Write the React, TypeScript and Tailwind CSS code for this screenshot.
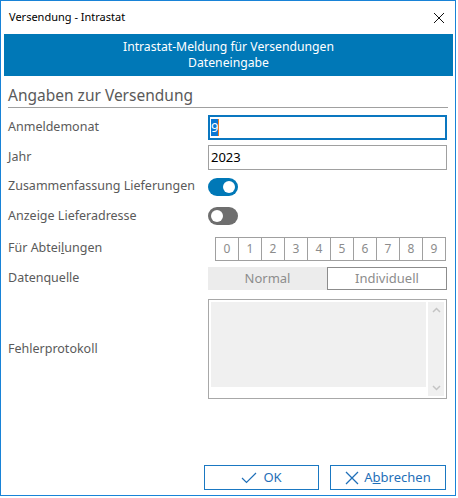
import React from "react";

const font = { fontFamily: '"Segoe UI", "Noto Sans", "Open Sans", sans-serif' };

function Toggle({ on }: { on: boolean }) {
  return (
    <div
      className={`flex h-[18px] w-[30px] items-center rounded-full px-[3px] ${on ? "justify-end bg-[#0078b7]" : "justify-start bg-[#6e6e6e]"}`}
    >
      <div className="h-[12px] w-[12px] rounded-full bg-white" />
    </div>
  );
}

function Row({ label, children, h }: { label: React.ReactNode; children: React.ReactNode; h: string }) {
  return (
    <div className={`flex items-center ${h}`}>
      <div className="w-[200px] text-[12.5px] text-[#5a5a5a]">{label}</div>
      <div className="flex w-[239px] items-center">{children}</div>
    </div>
  );
}

export default function App() {
  return (
    <div className="h-[498px] w-[458px] bg-white" style={font}>
      <div className="flex h-[496px] w-[456px] flex-col border border-[#1883d7] bg-white">
        <div className="flex h-[33px] items-center justify-between pl-[8px] pr-[10px] text-[11px] text-black">
          <span>Versendung - Intrastat</span>
          <svg width="12" height="12" viewBox="0 0 12 12">
            <path d="M1 1 L11 11 M11 1 L1 11" stroke="#111" strokeWidth="1" />
          </svg>
        </div>
        <div className="ml-[3px] mr-[2px] flex h-[42px] flex-col items-center justify-center bg-[#0078b7] text-[12.2px] leading-[16px] text-white">
          <div>Intrastat-Meldung für Versendungen</div>
          <div>Dateneingabe</div>
        </div>
        <div className="flex flex-col pl-[7px] pr-[7px]">
          <div className="mt-[10px] border-b border-[#a0a0a0] pb-[2px] text-[15.5px] leading-[19px] text-[#5a5a5a]">
            Angaben zur Versendung
          </div>
          <div className="mt-[7px] flex flex-col">
            <Row label="Anmeldemonat" h="h-[25px]">
              <div className="flex h-[25px] w-full items-center border-2 border-[#0a77c0] pl-[1px] text-[13px] text-black">
                <span className="bg-[#0a77d4] leading-[17px] text-white">9</span>
                <span className="h-[17px] w-[1px] bg-[#f07a1a]" />
              </div>
            </Row>
            <div className="h-[5px]" />
            <Row label="Jahr" h="h-[25px]">
              <div className="flex h-[25px] w-full items-center border border-[#a0a0a0] pl-[2px] text-[13px] text-black">
                2023
              </div>
            </Row>
            <Row label="Zusammenfassung Lieferungen" h="h-[33px]">
              <Toggle on />
            </Row>
            <Row label="Anzeige Lieferadresse" h="h-[26px]">
              <Toggle on={false} />
            </Row>
            <Row
              label={
                <span>
                  Für Abtei<span className="underline">l</span>ungen
                </span>
              }
              h="h-[39px]"
            >
              <div className="ml-[7px] flex h-[24px] border-l border-[#a0a0a0]">
                {[0, 1, 2, 3, 4, 5, 6, 7, 8, 9].map((d) => (
                  <div
                    key={d}
                    className="flex h-[24px] w-[23px] items-center justify-center border-y border-r border-[#a0a0a0] text-[12px] text-[#8c8c8c]"
                  >
                    {d}
                  </div>
                ))}
              </div>
            </Row>
            <Row label="Datenquelle" h="h-[21px]">
              <div className="flex h-[23px] w-full text-[13px] text-[#8c8c8c]">
                <div className="flex w-[119px] items-center justify-center bg-[#ececec]">Normal</div>
                <div className="flex w-[120px] items-center justify-center border border-[#8c8c8c]">Individuell</div>
              </div>
            </Row>
            <div className="h-[10px]" />
            <Row label="Fehlerprotokoll" h="h-[100px]">
              <div className="flex h-[100px] w-full border border-[#a8a8a8] bg-white p-[2px]">
                <div className="mb-[9px] flex-1 bg-[#f0f0f0]" />
                <div className="ml-[2px] flex w-[16px] flex-col items-center justify-between bg-[#f0f0f0] py-[5px]">
                  <svg width="9" height="6" viewBox="0 0 9 6">
                    <path d="M1 5 L4.5 1.5 L8 5" stroke="#c4c4c4" strokeWidth="1.5" fill="none" />
                  </svg>
                  <svg width="9" height="6" viewBox="0 0 9 6">
                    <path d="M1 1 L4.5 4.5 L8 1" stroke="#c4c4c4" strokeWidth="1.5" fill="none" />
                  </svg>
                </div>
              </div>
            </Row>
          </div>
        </div>
        <div className="mt-auto mb-[5px] flex justify-end gap-[11px] pr-[9px]">
          <button className="flex h-[25px] w-[115px] items-center justify-center gap-[6px] border border-[#1a78c2] text-[13px] text-[#1f6fb8]">
            <svg width="16" height="12" viewBox="0 0 16 12">
              <path d="M1 6 L5.5 10.5 L15 1" stroke="#1f6fb8" strokeWidth="1.2" fill="none" />
            </svg>
            OK
          </button>
          <button className="flex h-[25px] w-[116px] items-center justify-center gap-[5px] border border-[#1a78c2] text-[13px] text-[#1f6fb8]">
            <svg width="14" height="14" viewBox="0 0 14 14">
              <path d="M1 1 L13 13 M13 1 L1 13" stroke="#1f6fb8" strokeWidth="1.3" />
            </svg>
            <span>
              A<span className="underline">b</span>brechen
            </span>
          </button>
        </div>
      </div>
    </div>
  );
}
